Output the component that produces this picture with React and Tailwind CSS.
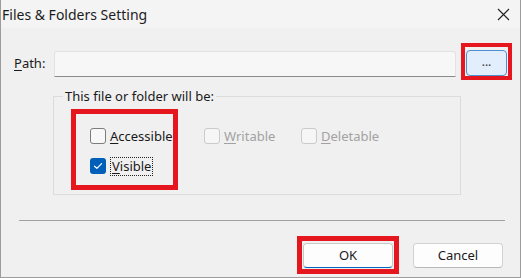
import React from "react";

const font = { fontFamily: '"Noto Sans", "Segoe UI", sans-serif' };

function CheckBox({ checked, disabled }) {
  if (checked) {
    return (
      <span className="flex h-[16px] w-[16px] shrink-0 items-center justify-center rounded-[3px] bg-[#005fb8]">
        <svg width="10" height="8" viewBox="0 0 10 8" fill="none">
          <path d="M1.5 4.2 3.9 6.4 8.6 1.6" stroke="#fff" strokeWidth="1.2" strokeLinecap="round" strokeLinejoin="round" />
        </svg>
      </span>
    );
  }
  return (
    <span
      className={
        disabled
          ? "h-[16px] w-[16px] shrink-0 rounded-[3px] border border-[#cbcbcb] bg-[#f6f6f6]"
          : "h-[16px] w-[16px] shrink-0 rounded-[3px] border border-[#7d7d7d] bg-[#f8f8f8]"
      }
    />
  );
}

function Option({ label, rest, checked, disabled, focused, className = "" }) {
  return (
    <label className={"flex h-[16px] items-center gap-[4px] " + className}>
      <CheckBox checked={checked} disabled={disabled} />
      <span
        className={[
          "leading-none",
          disabled ? "text-[#a2a2a2]" : "text-[#1a1a1a]",
          focused ? "border border-dotted border-[#222] px-px py-[2px]" : "",
        ].join(" ")}
      >
        <span className="underline underline-offset-2">{label}</span>
        {rest}
      </span>
    </label>
  );
}

export default function App() {
  return (
    <div
      className="flex h-[278px] w-[521px] flex-col overflow-hidden border-x border-b border-[#9c9c9c] bg-[#f0f0f0] text-[13px] text-[#1a1a1a]"
      style={font}
    >
      {/* title bar */}
      <div className="flex h-[28px] shrink-0 items-center justify-between bg-[#f4f4f4] pl-[1px] pr-[10px]">
        <span className="text-[14px] text-[#1c1c1c]">Files &amp; Folders Setting</span>
        <svg width="13" height="13" viewBox="0 0 13 13">
          <path d="M1 1 12 12M12 1 1 12" stroke="#222" strokeWidth="1.1" />
        </svg>
      </div>

      {/* path row */}
      <div className="mt-[15px] flex items-start pl-[13px] pr-[8px]">
        <span className="mt-[14px] w-[40px] leading-none">
          <span className="underline underline-offset-2">P</span>ath:
        </span>
        <div className="mt-[8px] h-[26px] flex-1 rounded-t-[3px] border border-b-[#8a8a8a] border-x-[#e2e2e2] border-t-[#e2e2e2] bg-[#f7f7f7]" />
        <div className="ml-[5px] flex h-[37px] w-[51px] items-center justify-center border-[4px] border-[#e5161d]">
          <button className="mt-[2px] flex h-[26px] w-[41px] items-center justify-center rounded-[4px] border border-[#4f8fcf] bg-[#e2eefb] pb-[2px] text-[12px] leading-none text-[#333]">
            ...
          </button>
        </div>
      </div>

      {/* group box */}
      <fieldset className="ml-[52px] mt-[7px] h-[108px] w-[408px] border border-[#dcdcdc]">
        <legend className="ml-[9px] px-[2px] leading-[18px]">This file or folder will be:</legend>
        <div className="flex items-start">
          <div className="ml-[17px] mt-[4px] flex w-[107px] flex-col gap-[14px] border-[5px] border-[#e5161d] pb-[11px] pl-[14px] pt-[14px]">
            <Option label="A" rest="ccessible" />
            <Option label="V" rest="isible" checked focused />
          </div>
          <div className="ml-[26px] mt-[23px] flex">
            <Option label="W" rest="ritable" disabled className="w-[97px]" />
            <Option label="D" rest="eletable" disabled />
          </div>
        </div>
      </fieldset>

      {/* separator */}
      <div className="ml-[18px] mr-[15px] mt-[25px] h-px bg-[#a0a0a0]" />

      {/* buttons */}
      <div className="mt-[15px] flex items-center justify-end gap-[14px] pr-[17px]">
        <div className="flex h-[38px] w-[102px] items-center justify-center border-[5px] border-[#e5161d]">
          <button className="h-[25px] w-[90px] rounded-[4px] border border-[#c8c8c8] border-b-[#0067c0] bg-[#fdfdfd] leading-none">
            OK
          </button>
        </div>
        <button className="h-[25px] w-[90px] rounded-[4px] border border-[#d2d2d2] border-b-[#b8b8b8] bg-[#fdfdfd] leading-none">
          Cancel
        </button>
      </div>
    </div>
  );
}
